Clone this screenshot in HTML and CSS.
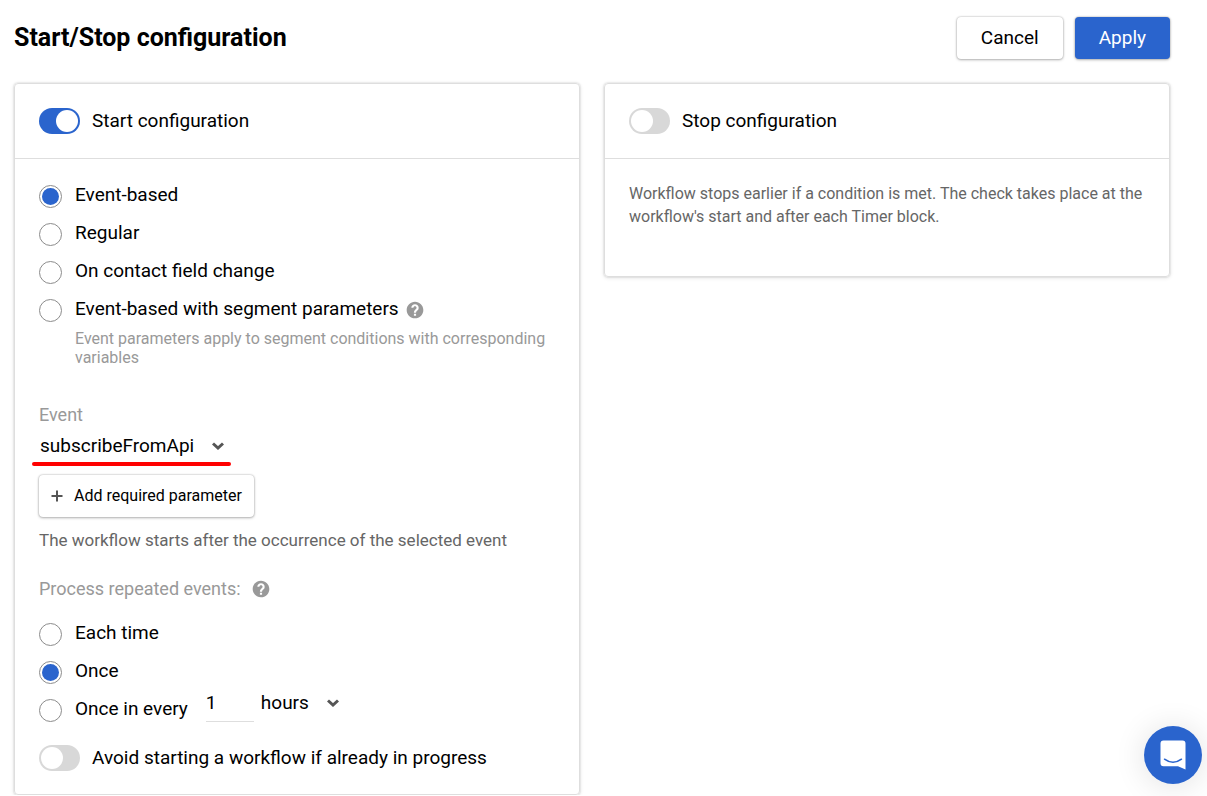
FILE: index.html
```html
<!DOCTYPE html>
<html lang="en">

<head>

    <meta charset="UTF-8">
    <meta name="viewport" content="width=device-width, initial-scale=1.0">
    <title>Start/Stop configuration</title>

    <link rel="stylesheet" href="styles.css">

</head>

<body>

    <header class="page-header">
        <h1>Start/Stop configuration</h1>
        <div class="actions">
            <button type="button" class="btn">Cancel</button>
            <button type="button" class="btn btn-primary">Apply</button>
        </div>
    </header>

    <main class="columns">

        <section class="card">
            <div class="card-header">
                <label class="switch-row">
                    <input type="checkbox" class="switch" checked>
                    <span>Start configuration</span>
                </label>
            </div>

            <div class="card-body">
                <div class="radio-group">
                    <label class="radio-row">
                        <input type="radio" name="startType" class="radio" checked>
                        <span>Event-based</span>
                    </label>
                    <label class="radio-row">
                        <input type="radio" name="startType" class="radio">
                        <span>Regular</span>
                    </label>
                    <label class="radio-row">
                        <input type="radio" name="startType" class="radio">
                        <span>On contact field change</span>
                    </label>
                    <div class="radio-line">
                        <label class="radio-row">
                            <input type="radio" name="startType" class="radio">
                            <span>Event-based with segment parameters</span>
                        </label>
                        <svg class="help" viewBox="0 0 24 24"><path d="M12 2C6.500 2 2 6.500 2 12s4.500 10 10 10 10-4.500 10-10S17.500 2 12 2zm1.300 17h-2.600v-2.600h2.600V19zm2.500-7.300l-1 1c-.9.900-1.500 1.500-1.500 2.700h-2.600v-.6c0-1.200.5-2.100 1.300-2.900l1.300-1.300c.4-.4.600-.8.600-1.400 0-1-.8-1.800-1.900-1.800s-1.900.8-1.900 1.800H7.600C7.600 6.800 9.600 5 12 5s4.400 1.800 4.400 4.200c0 1-.3 1.800-.6 2.500z"/></svg>
                    </div>
                </div>
                <p class="hint">Event parameters apply to segment conditions with corresponding variables</p>

                <label class="field-label event-label" for="event">Event</label>
                <div class="select event-select">
                    <select id="event">
                        <option>subscribeFromApi</option>
                    </select>
                    <svg class="chevron" viewBox="0 0 12 8"><path d="M1 1.500l5 4.500 5-4.500"/></svg>
                </div>

                <button type="button" class="btn btn-add">
                    <svg class="plus" viewBox="0 0 12 12"><path d="M6 0.500v11M0.500 6h11"/></svg>
                    Add required parameter
                </button>

                <p class="note">The workflow starts after the occurrence of the selected event</p>

                <div class="repeat-title">
                    <span class="field-label">Process repeated events:</span>
                    <svg class="help" viewBox="0 0 24 24"><path d="M12 2C6.500 2 2 6.500 2 12s4.500 10 10 10 10-4.500 10-10S17.500 2 12 2zm1.300 17h-2.600v-2.600h2.600V19zm2.500-7.300l-1 1c-.9.900-1.500 1.500-1.500 2.700h-2.600v-.6c0-1.200.5-2.100 1.300-2.900l1.300-1.300c.4-.4.600-.8.600-1.400 0-1-.8-1.800-1.900-1.800s-1.900.8-1.900 1.800H7.600C7.600 6.800 9.600 5 12 5s4.400 1.800 4.400 4.200c0 1-.3 1.800-.6 2.500z"/></svg>
                </div>

                <div class="radio-group">
                    <label class="radio-row">
                        <input type="radio" name="repeat" class="radio">
                        <span>Each time</span>
                    </label>
                    <label class="radio-row">
                        <input type="radio" name="repeat" class="radio" checked>
                        <span>Once</span>
                    </label>
                    <div class="radio-line">
                        <label class="radio-row">
                            <input type="radio" name="repeat" class="radio">
                            <span>Once in every</span>
                        </label>
                        <div class="interval">
                            <input type="text" class="count" value="1" aria-label="Interval">
                            <div class="select">
                                <select aria-label="Interval unit">
                                    <option>hours</option>
                                </select>
                                <svg class="chevron" viewBox="0 0 12 8"><path d="M1 1.500l5 4.500 5-4.500"/></svg>
                            </div>
                        </div>
                    </div>
                </div>

                <label class="switch-row avoid">
                    <input type="checkbox" class="switch">
                    <span>Avoid starting a workflow if already in progress</span>
                </label>
            </div>
        </section>

        <section class="card">
            <div class="card-header">
                <label class="switch-row">
                    <input type="checkbox" class="switch">
                    <span>Stop configuration</span>
                </label>
            </div>
            <div class="card-body">
                <p class="description">Workflow stops earlier if a condition is met. The check takes place at the workflow's start and after each Timer block.</p>
            </div>
        </section>

    </main>

    <button type="button" class="chat" aria-label="Open chat">
        <svg viewBox="0 0 26 30"><path class="bubble" d="M3.500 0.500h19a3 3 0 0 1 3 3v26l-7.500-3.200H3.500a3 3 0 0 1-3-3V3.500a3 3 0 0 1 3-3z"/><path class="smile" d="M4.500 19.200c5 3.900 12 3.900 17 0"/></svg>
    </button>

</body>

</html>
```

FILE: styles.css
```css
* {
    box-sizing: border-box;
}

:root {
    --blue: #2a64cd;
    --gray: #999;
    --line: #dedede;
}

body {
    margin: 0;
    padding: 17px 37px 0 14px;
    background-color: #fff;
    color: #000;
    font-family: Roboto, sans-serif;
    font-size: 19px;
    line-height: 22px;
}

h1,
p {
    margin: 0;
}

input,
select,
button {
    font-family: inherit;
    font-size: inherit;
    line-height: inherit;
    color: inherit;
}

.page-header {
    display: flex;
    justify-content: space-between;
    align-items: center;
    margin-bottom: 24px;
}

.page-header h1 {
    font-size: 25px;
    line-height: 38px;
    font-weight: 700;
}

.actions {
    display: flex;
    gap: 12px;
}

.btn {
    height: 42px;
    padding: 0 24px;
    border: 0;
    border-radius: 4px;
    background-color: #fff;
    box-shadow: 0 0 2px rgba(0, 0, 0, 0.3), 0 1px 3px rgba(0, 0, 0, 0.25);
    cursor: pointer;
}

.btn-primary {
    background-color: var(--blue);
    color: #fff;
}

.columns {
    display: grid;
    grid-template-columns: 1fr 1fr;
    gap: 24px;
    align-items: start;
}

.card {
    border: 1px solid var(--line);
    border-radius: 4px;
    box-shadow: 0 0 2px rgba(0, 0, 0, 0.2), 0 1px 4px rgba(0, 0, 0, 0.1);
}

.card-header {
    padding: 24px;
    border-bottom: 1px solid var(--line);
}

.card-body {
    padding: 18px 24px 23px;
}

/* switches */

.switch-row {
    display: flex;
    align-items: center;
    gap: 12px;
    width: fit-content;
}

.switch {
    appearance: none;
    flex: none;
    display: flex;
    align-items: center;
    width: 41px;
    height: 26px;
    margin: 0;
    padding: 2px;
    border-radius: 13px;
    background-color: #d8d8d8;
}

.switch::before {
    content: '';
    width: 22px;
    height: 22px;
    border-radius: 50%;
    background-color: #fff;
}

.switch:checked {
    justify-content: flex-end;
    background-color: var(--blue);
}

/* radios */

.radio-line {
    display: flex;
    align-items: center;
    height: 38px;
}

.radio-row {
    display: flex;
    align-items: center;
    gap: 13px;
    width: fit-content;
    height: 38px;
}

.radio-row span {
    padding-bottom: 2px;
}

.radio {
    appearance: none;
    flex: none;
    width: 23px;
    height: 23px;
    margin: 0;
    padding: 2px;
    border: 1px solid #8c8c8c;
    border-radius: 50%;
    background-color: #fff;
    background-clip: content-box;
}

.radio:checked {
    background-color: var(--blue);
}

.help {
    width: 20px;
    height: 20px;
    margin-left: 6px;
    fill: var(--gray);
}

.hint {
    padding-left: 36px;
    color: var(--gray);
    font-size: 16px;
    line-height: 19px;
}

.field-label {
    color: var(--gray);
    font-size: 18px;
}

.event-label {
    display: block;
    margin-top: 37px;
}

/* selects */

.select {
    position: relative;
    width: fit-content;
}

.select select {
    appearance: none;
    display: block;
    height: 40px;
    padding: 0 29px 0 1px;
    border: 0;
    background: none;
}

.chevron {
    position: absolute;
    top: 16px;
    right: 0;
    width: 12px;
    height: 8px;
    fill: none;
    stroke: #555;
    stroke-width: 3;
    pointer-events: none;
}

.event-select::after {
    content: '';
    position: absolute;
    left: -7px;
    right: -7px;
    bottom: 0;
    height: 4px;
    border-radius: 2px;
    background-color: #f00;
}

.btn-add {
    display: flex;
    align-items: center;
    gap: 11px;
    margin-top: 9px;
    padding: 0 12px;
    font-size: 16px;
}

.plus {
    width: 12px;
    height: 12px;
    fill: none;
    stroke: #555;
    stroke-width: 2;
}

.note {
    margin-top: 12px;
    color: #666;
    font-size: 17px;
}

.repeat-title {
    display: flex;
    align-items: center;
    gap: 4px;
    margin: 27px 0 15px;
}

.interval {
    display: flex;
    align-items: center;
    gap: 6px;
    margin-left: 18px;
    padding-bottom: 14px;
}

.count {
    width: 48px;
    height: 38px;
    padding: 0;
    border: 0;
    border-bottom: 1px solid var(--line);
    background: none;
}

.avoid {
    margin-top: 16px;
}

.description {
    padding: 5px 0 25px;
    color: #666;
    font-size: 16px;
    line-height: 23px;
}

/* chat launcher */

.chat {
    position: fixed;
    right: 5px;
    bottom: 12px;
    display: flex;
    justify-content: center;
    align-items: center;
    width: 58px;
    height: 58px;
    padding: 0;
    border: 0;
    border-radius: 50%;
    background-color: var(--blue);
    box-shadow: 0 2px 32px rgba(0, 0, 0, 0.12);
}

.chat svg {
    width: 26px;
    height: 30px;
}

.chat .bubble {
    fill: #fff;
}

.chat .smile {
    fill: none;
    stroke: var(--blue);
    stroke-width: 1.5;
    stroke-linecap: round;
}
```
